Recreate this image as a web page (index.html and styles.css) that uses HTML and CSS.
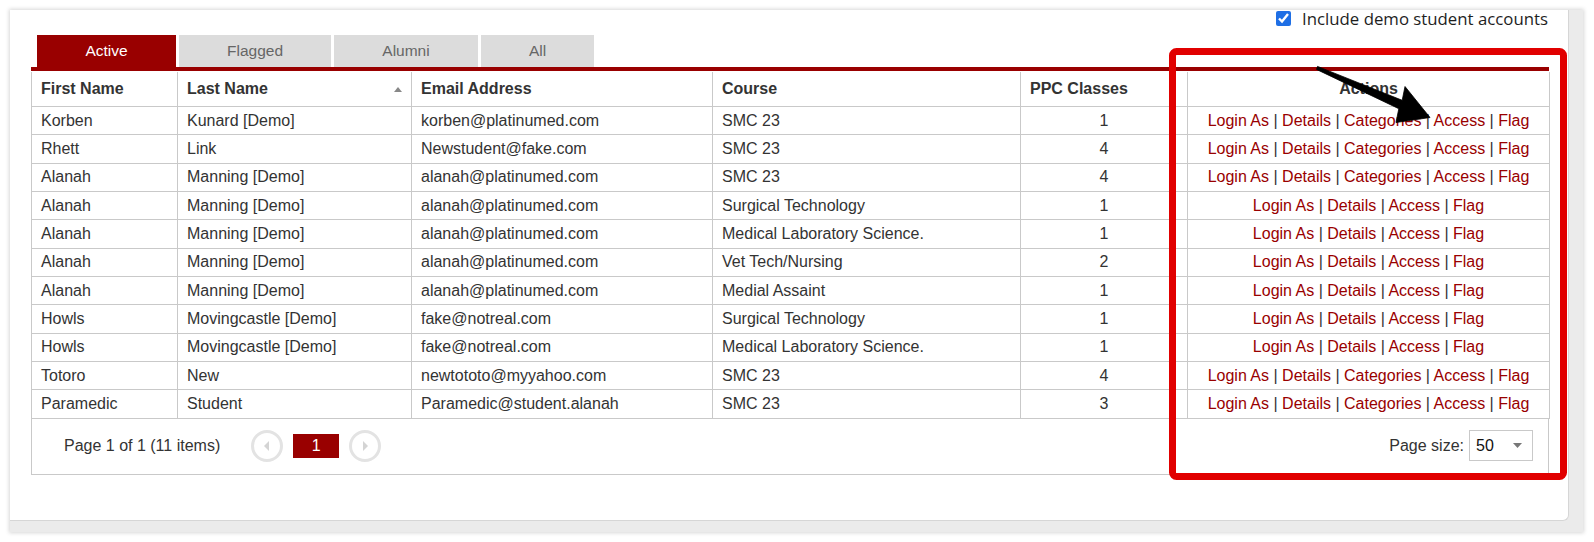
FILE: index.html
```html
<!DOCTYPE html>
<html>
<head>
<meta charset="utf-8">
<link rel="stylesheet" href="styles.css">
</head>
<body>
<div class="frame">
  <div class="panel">
    <div class="topbar">
      <label class="demo"><input type="checkbox" checked><span>Include demo student accounts</span></label>
    </div>
    <div class="grid">
      <div class="tabs">
        <div class="tab active t1">Active</div>
        <div class="tab t2">Flagged</div>
        <div class="tab t3">Alumni</div>
        <div class="tab t4">All</div>
      </div>
      <div class="stripe"></div>
      <table class="students">
        <colgroup>
          <col class="c1"><col class="c2"><col class="c3"><col class="c4"><col class="c5"><col class="c6">
        </colgroup>
        <thead>
          <tr>
            <th>First Name</th>
            <th class="sorted">Last Name<span class="sort"></span></th>
            <th>Email Address</th>
            <th>Course</th>
            <th>PPC Classes</th>
            <th class="center">Actions</th>
          </tr>
        </thead>
        <tbody>
          <tr><td>Korben</td><td>Kunard [Demo]</td><td>korben@platinumed.com</td><td>SMC 23</td><td class="center">1</td><td class="center act"><a>Login As</a> | <a>Details</a> | <a>Categories</a> | <a>Access</a> | <a>Flag</a></td></tr>
          <tr><td>Rhett</td><td>Link</td><td>Newstudent@fake.com</td><td>SMC 23</td><td class="center">4</td><td class="center act"><a>Login As</a> | <a>Details</a> | <a>Categories</a> | <a>Access</a> | <a>Flag</a></td></tr>
          <tr><td>Alanah</td><td>Manning [Demo]</td><td>alanah@platinumed.com</td><td>SMC 23</td><td class="center">4</td><td class="center act"><a>Login As</a> | <a>Details</a> | <a>Categories</a> | <a>Access</a> | <a>Flag</a></td></tr>
          <tr><td>Alanah</td><td>Manning [Demo]</td><td>alanah@platinumed.com</td><td>Surgical Technology</td><td class="center">1</td><td class="center act"><a>Login As</a> | <a>Details</a> | <a>Access</a> | <a>Flag</a></td></tr>
          <tr><td>Alanah</td><td>Manning [Demo]</td><td>alanah@platinumed.com</td><td>Medical Laboratory Science.</td><td class="center">1</td><td class="center act"><a>Login As</a> | <a>Details</a> | <a>Access</a> | <a>Flag</a></td></tr>
          <tr><td>Alanah</td><td>Manning [Demo]</td><td>alanah@platinumed.com</td><td>Vet Tech/Nursing</td><td class="center">2</td><td class="center act"><a>Login As</a> | <a>Details</a> | <a>Access</a> | <a>Flag</a></td></tr>
          <tr><td>Alanah</td><td>Manning [Demo]</td><td>alanah@platinumed.com</td><td>Medial Assaint</td><td class="center">1</td><td class="center act"><a>Login As</a> | <a>Details</a> | <a>Access</a> | <a>Flag</a></td></tr>
          <tr><td>Howls</td><td>Movingcastle [Demo]</td><td>fake@notreal.com</td><td>Surgical Technology</td><td class="center">1</td><td class="center act"><a>Login As</a> | <a>Details</a> | <a>Access</a> | <a>Flag</a></td></tr>
          <tr><td>Howls</td><td>Movingcastle [Demo]</td><td>fake@notreal.com</td><td>Medical Laboratory Science.</td><td class="center">1</td><td class="center act"><a>Login As</a> | <a>Details</a> | <a>Access</a> | <a>Flag</a></td></tr>
          <tr><td>Totoro</td><td>New</td><td>newtototo@myyahoo.com</td><td>SMC 23</td><td class="center">4</td><td class="center act"><a>Login As</a> | <a>Details</a> | <a>Categories</a> | <a>Access</a> | <a>Flag</a></td></tr>
          <tr><td>Paramedic</td><td>Student</td><td>Paramedic@student.alanah</td><td>SMC 23</td><td class="center">3</td><td class="center act"><a>Login As</a> | <a>Details</a> | <a>Categories</a> | <a>Access</a> | <a>Flag</a></td></tr>
        </tbody>
      </table>
      <div class="pager">
        <span class="info">Page 1 of 1 (11 items)</span>
        <span class="nav prev"><svg width="8" height="10" viewBox="0 0 8 10"><path d="M6 0 L1 5 L6 10 Z" fill="#d4d4d4"/></svg></span>
        <span class="page">1</span>
        <span class="nav next"><svg width="8" height="10" viewBox="0 0 8 10"><path d="M2 0 L7 5 L2 10 Z" fill="#d4d4d4"/></svg></span>
        <span class="size-label">Page size:</span>
        <span class="select">50<svg class="caret" width="9" height="5" viewBox="0 0 9 5"><path d="M0 0 H9 L4.5 5 Z" fill="#777"/></svg></span>
      </div>
    </div>
  </div>
</div>
<svg class="annot" width="1594" height="542" viewBox="0 0 1594 542">
  <rect x="1172.5" y="51.5" width="391" height="425" rx="4" ry="4" fill="none" stroke="#e10000" stroke-width="7"/>
  <polygon points="1317.5,66.4 1402.2,100.3 1405,86.5 1430,117.5 1396,122.5 1398.8,108.7 1316.5,69.4" fill="#000" stroke="#000" stroke-width="0.8" stroke-linejoin="round"/>
</svg>
</body>
</html>
```

FILE: styles.css
```css
html, body {
  margin: 0;
  padding: 0;
  background: #ffffff;
}
body {
  width: 1594px;
  height: 542px;
  overflow: hidden;
  position: relative;
  font-family: "Liberation Sans", Arial, sans-serif;
  font-size: 16px;
  color: #333333;
}
.frame {
  margin: 10px 0 0 10px;
  width: 1573px;
  height: 522px;
  background: #ebebeb;
  box-shadow: 0 0 4px 1px rgba(0, 0, 0, 0.16);
}
.panel {
  width: 1558px;
  height: 510px;
  background: #ffffff;
  border-right: 1px solid #d6d6d6;
  border-bottom: 1px solid #d6d6d6;
  border-bottom-right-radius: 6px;
}
.topbar {
  height: 25px;
  display: flex;
  justify-content: flex-end;
  align-items: flex-start;
  padding-right: 20px;
}
.demo {
  display: flex;
  align-items: center;
  height: 16px;
  font-family: "Open Sans", "Noto Sans", sans-serif;
  font-size: 16.8px;
  color: #1e1e1e;
}
.demo input {
  margin: 0 11px 0 0;
  width: 15px;
  height: 15px;
  accent-color: #1f6fe5;
}
.grid {
  margin-left: 21px;
  width: 1518px;
}
.tabs {
  display: flex;
  padding-left: 6px;
  gap: 3px;
  height: 32px;
}
.tab {
  height: 32px;
  line-height: 32px;
  text-align: center;
  background: #dcdcdc;
  color: #666666;
  font-size: 15.5px;
}
.tab.active {
  background: #990000;
  color: #ffffff;
}
.t1 { width: 139px; }
.t2 { width: 152px; }
.t3 { width: 144px; }
.t4 { width: 113px; }
.stripe {
  height: 4px;
  background: #990000;
}
.students {
  width: 1518px;
  table-layout: fixed;
  border-collapse: collapse;
  margin-top: 1px;
}
.c1 { width: 146px; }
.c2 { width: 234px; }
.c3 { width: 301px; }
.c4 { width: 308px; }
.c5 { width: 167px; }
.c6 { width: 362px; }
.students th, .students td {
  border: 1px solid #c9c9c9;
  padding: 0 9px;
  text-align: left;
  white-space: nowrap;
  overflow: hidden;
}
.students th {
  border-top: none;
  height: 34px;
  font-weight: bold;
  color: #333333;
}
.students td {
  height: 27.35px;
  color: #333333;
}
.students .center {
  text-align: center;
}
.sorted {
  position: relative;
}
.sort {
  position: absolute;
  right: 9px;
  top: 15px;
  width: 0;
  height: 0;
  border-left: 4px solid transparent;
  border-right: 4px solid transparent;
  border-bottom: 5px solid #888888;
}
.act a {
  color: #990000;
  text-decoration: none;
}
.pager {
  height: 56px;
  border: 1px solid #c9c9c9;
  border-top: none;
  display: flex;
  align-items: center;
  padding: 0 15px 0 32px;
  margin-top: -1px;
}
.info {
  color: #333333;
  margin-right: 31px;
}
.nav {
  width: 26px;
  height: 26px;
  border: 3px solid #e3e3e3;
  border-radius: 50%;
  display: flex;
  align-items: center;
  justify-content: center;
}
.page {
  width: 46px;
  height: 24px;
  line-height: 24px;
  text-align: center;
  background: #990000;
  color: #ffffff;
  margin: 0 10px;
}
.size-label {
  margin-left: auto;
  margin-right: 5px;
  color: #333333;
}
.select {
  width: 56px;
  height: 29px;
  border: 1px solid #c9c9c9;
  padding-left: 6px;
  display: flex;
  align-items: center;
  justify-content: space-between;
  color: #111111;
}
.caret {
  margin-right: 10px;
}
.annot {
  position: absolute;
  top: 0;
  left: 0;
  pointer-events: none;
}
```
